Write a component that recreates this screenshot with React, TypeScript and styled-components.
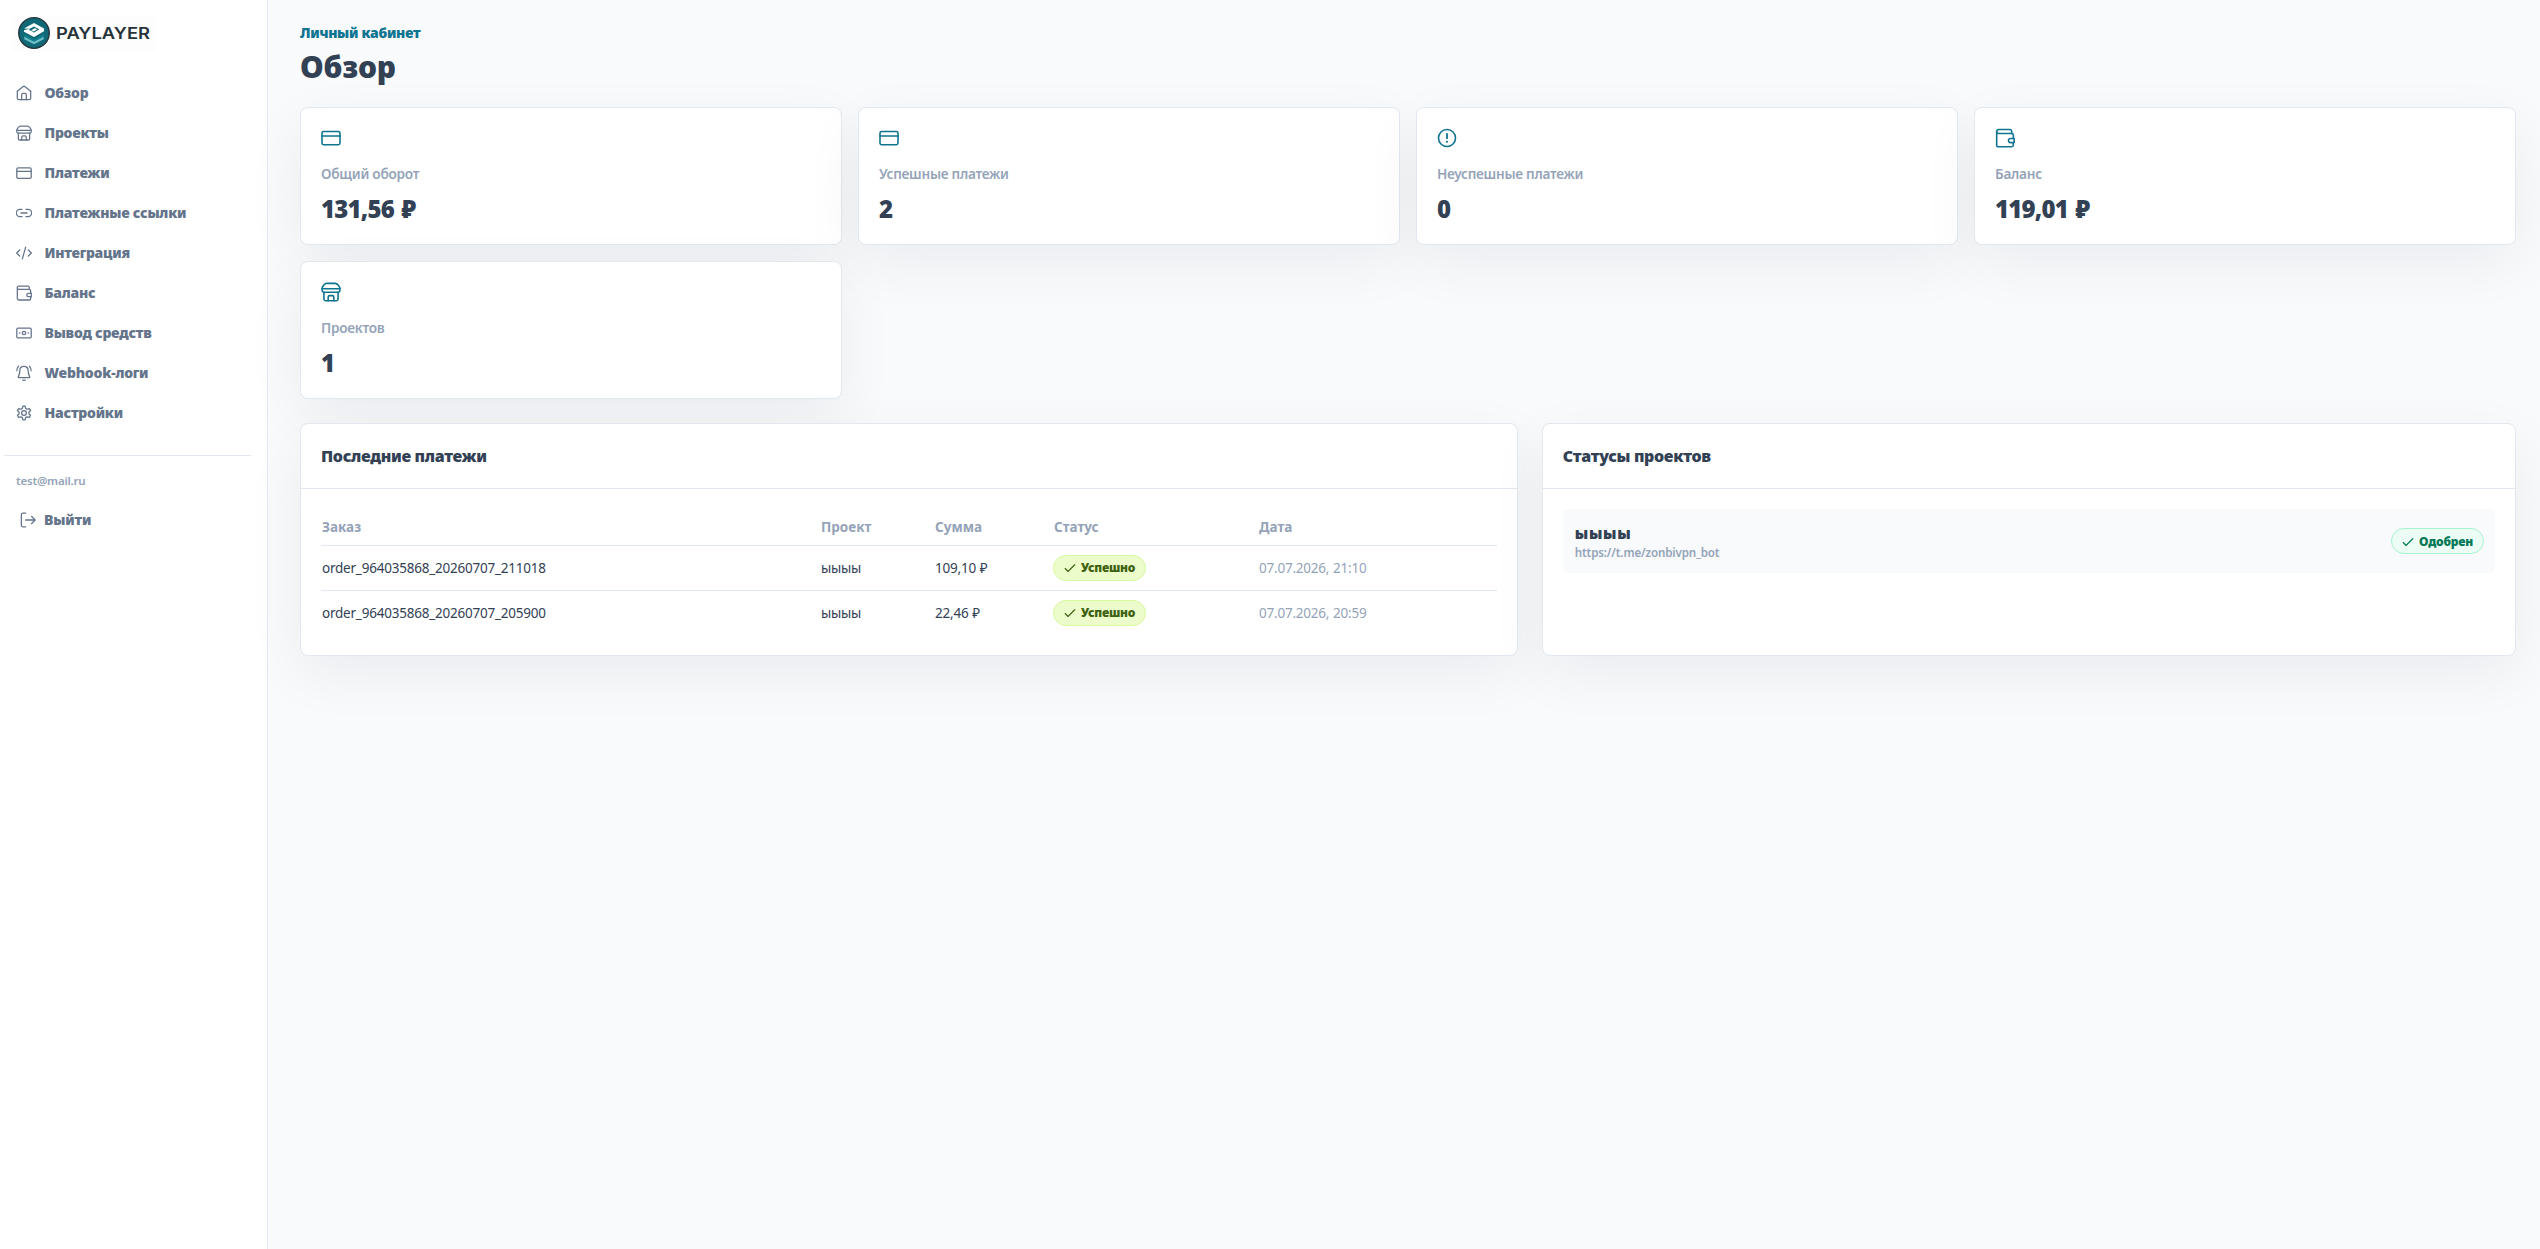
import React from 'react';
import styled, { createGlobalStyle } from 'styled-components';

const GlobalStyle = createGlobalStyle`
  *, *::before, *::after { box-sizing: border-box; }
  body {
    margin: 0;
    background: #f8fafc;
    color: #334155;
    font-family: "Noto Sans", "Open Sans", sans-serif;
    font-size: 14px;
    line-height: 20px;
  }
`;

const ink = '#334155';
const muted = '#94a3b8';
const line = '#e2e8f0';
const accent = '#0e7490';

const Shell = styled.div`
  display: grid;
  grid-template-columns: 268px minmax(0, 1fr);
  min-height: 100vh;
`;

const Sidebar = styled.aside`
  display: flex;
  flex-direction: column;
  padding: 15px 16px 0 4px;
  background: #fff;
  border-right: 1px solid ${line};
`;

const Brand = styled.div`
  display: flex;
  align-items: center;
  width: 144px;
  height: 36px;
  margin: 0 0 22px 8px;
  padding-left: 5.5px;
  background: #fdfdfd;
`;

const Nav = styled.nav`
  display: flex;
  flex-direction: column;
`;

const NavItem = styled.a`
  display: flex;
  align-items: center;
  gap: 12.5px;
  height: 40px;
  padding: 0 12px;
  color: #64748b;
  font-weight: 900;
  letter-spacing: -0.24px;
`;

const Account = styled.div`
  display: flex;
  flex-direction: column;
  margin-top: 22px;
  padding-top: 15px;
  border-top: 1px solid ${line};
`;

const Email = styled.div`
  padding-left: 12px;
  color: ${muted};
  font-size: 11.5px;
  font-weight: 600;
  line-height: 20px;
  letter-spacing: -0.2px;
`;

const Logout = styled.button`
  display: flex;
  align-items: center;
  gap: 8px;
  height: 40px;
  margin-top: 9px;
  padding: 0 16px;
  border: 0;
  background: none;
  color: #64748b;
  font: inherit;
  font-weight: 900;
  letter-spacing: -0.15px;
`;

const Main = styled.main`
  padding: 23px 24px 24px 32px;
`;

const Eyebrow = styled.p`
  margin: 0;
  color: ${accent};
  font-weight: 900;
  letter-spacing: -0.3px;
`;

const Title = styled.h1`
  margin: 4px 0 20px;
  color: ${ink};
  font-size: 30px;
  font-weight: 900;
  line-height: 40px;
  letter-spacing: -0.2px;
`;

const Surface = styled.section`
  border: 1px solid ${line};
  border-radius: 8px;
  background: #fff;
  box-shadow: 0 18px 58px rgba(15, 23, 42, 0.06);
`;

const Stats = styled.div`
  display: grid;
  grid-template-columns: repeat(4, minmax(0, 1fr));
  gap: 16px;
`;

const StatCard = styled(Surface)`
  display: flex;
  flex-direction: column;
  height: 138px;
  padding: 20px;
`;

const StatLabel = styled.div`
  margin-top: 16px;
  color: ${muted};
  font-size: 13.6px;
  font-weight: 600;
  letter-spacing: -0.25px;
`;

const StatValue = styled.div`
  margin-top: 9px;
  color: ${ink};
  font-size: 24px;
  font-weight: 900;
  line-height: 32px;
  letter-spacing: -0.8px;
  word-spacing: 2px;
`;

const Panels = styled.div`
  display: grid;
  grid-template-columns: 1.25fr 1fr;
  gap: 24px;
  margin-top: 24px;
`;

const PanelHeader = styled.header`
  display: flex;
  align-items: center;
  height: 65px;
  padding: 0 20px;
  border-bottom: 1px solid ${line};
`;

const PanelTitle = styled.h2`
  margin: 0;
  color: ${ink};
  font-size: 16px;
  font-weight: 900;
  line-height: 24px;
  letter-spacing: -0.33px;
`;

const PanelBody = styled.div`
  padding: 20px;
`;

const Table = styled.table`
  width: 100%;
  border-collapse: collapse;
  table-layout: fixed;
  font-size: 13.5px;
`;

const Column = styled.col<{ $width?: string }>`
  width: ${(p) => p.$width ?? 'auto'};
`;

const HeadCell = styled.th`
  height: 36px;
  padding: 0 0 0 1px;
  border-bottom: 1px solid ${line};
  color: ${muted};
  font-weight: 700;
  text-align: left;
`;

const Row = styled.tr`
  height: 45px;
  &:not(:last-child) { border-bottom: 1px solid ${line}; }
`;

const Cell = styled.td<{ $muted?: boolean }>`
  padding: 0 0 0 1px;
  color: ${(p) => (p.$muted ? muted : ink)};
  letter-spacing: -0.22px;
  word-spacing: 0.5px;
`;

const BadgeCell = styled(Cell)`
  padding: 0;
`;

const Badge = styled.span<{ $tone: 'lime' | 'green' }>`
  display: inline-flex;
  align-items: center;
  gap: 5px;
  height: 26px;
  padding: 1px 10px 0;
  border: 1px solid ${(p) => (p.$tone === 'lime' ? '#d9f99d' : '#a7f3d0')};
  border-radius: 13px;
  background: ${(p) => (p.$tone === 'lime' ? '#ecfccb' : '#ecfdf5')};
  color: ${(p) => (p.$tone === 'lime' ? '#3f6212' : '#047857')};
  font-size: 12px;
  font-weight: 900;
  line-height: 16px;
  letter-spacing: -0.22px;
  vertical-align: middle;
`;

const Project = styled.div`
  display: flex;
  align-items: center;
  justify-content: space-between;
  height: 64px;
  padding: 0 11px 0 12px;
  border-radius: 6px;
  background: #f8fafc;
`;

const ProjectName = styled.div`
  margin-top: 3px;
  color: ${ink};
  font-size: 15.5px;
  font-weight: 900;
  line-height: 20px;
  letter-spacing: 0.7px;
`;

const ProjectUrl = styled.div`
  padding-top: 1px;
  color: ${muted};
  font-size: 11.6px;
  font-weight: 600;
  line-height: 18px;
  letter-spacing: -0.15px;
`;

const Icon = styled.svg.attrs({ viewBox: '0 0 24 24' })<{ $size: number }>`
  flex: none;
  width: ${(p) => p.$size}px;
  height: ${(p) => p.$size}px;
  fill: none;
  stroke: currentColor;
  stroke-width: 1.9;
  stroke-linecap: round;
  stroke-linejoin: round;
`;

const StatIcon = styled(Icon)`
  color: ${accent};
`;

const glyphs = {
  home: (
    <>
      <path d="M2 9.5 10.3 2.6a2.7 2.7 0 0 1 3.4 0L22 9.5" />
      <path d="M2 9.5V20a2 2 0 0 0 2 2h16a2 2 0 0 0 2-2V9.5" />
      <path d="M8.5 22v-7.5a2 2 0 0 1 2-2h3a2 2 0 0 1 2 2V22" />
    </>
  ),
  store: (
    <>
      <path d="M7 1.600h10c2.600 0 5.700 3.800 5.700 6.400H1.300c0-2.600 3.100-6.400 5.700-6.400Z" />
      <path d="M1.300 8v2.300a1.900 1.900 0 0 0 1.900 1.900h17.600a1.900 1.900 0 0 0 1.900-1.900V8" />
      <path d="M3.500 12.200v8.300a2 2 0 0 0 2 2h13a2 2 0 0 0 2-2v-8.300" />
      <path d="M8.600 22.500v-4.200a2 2 0 0 1 2-2h2.800a2 2 0 0 1 2 2v4.200" />
    </>
  ),
  card: (
    <>
      <rect x="1.200" y="4.200" width="21.600" height="15.800" rx="2" />
      <path d="M1.200 9.500h21.600" />
    </>
  ),
  link: (
    <path d="M9 17.500H6a5.500 5.500 0 0 1 0-11h3M15 6.500h3a5.500 5.500 0 0 1 0 11h-3M7.500 12h9" />
  ),
  code: <path d="m18.500 16.500 4.500-4.500-4.500-4.500M5.500 7.500 1 12l4.500 4.500M14.500 3.200l-5 17.600" />,
  wallet: (
    <>
      <path d="M22 12.500V8.500a2 2 0 0 0-2-2H4.200A2.300 2.300 0 0 1 2 4.300v16a2.200 2.200 0 0 0 2.200 2.200H20a2 2 0 0 0 2-2v-3" />
      <path d="M20 6.500V3.800a2 2 0 0 0-2-2H4.300A2.300 2.300 0 0 0 2 4.200" />
      <path d="M23 12.500h-4.300a2.500 2.500 0 0 0 0 5H23Z" />
    </>
  ),
  cash: (
    <>
      <rect x="1.200" y="4.700" width="21.600" height="14.600" rx="1.800" />
      <circle cx="12" cy="12" r="2.600" />
      <path d="M5.500 12h.2M18.300 12h.2" strokeWidth="2.200" />
    </>
  ),
  bell: (
    <>
      <path d="M12 2.200c-4.200 0-6.300 3-6.300 6.500 0 5.300-1.500 7.200-2.300 9.300-.2.500.1 1 .7 1h15.800c.6 0 .9-.5.7-1-.8-2.100-2.300-4-2.300-9.300 0-3.500-2.100-6.500-6.300-6.500Z" />
      <path d="M10.300 22.400c.9.700 2.500.7 3.400 0M3.800 1.700C2.300 3.600 1.300 6 1.300 8.500M20.200 1.700c1.500 1.900 2.500 4.300 2.500 6.800" />
    </>
  ),
  gear: (
    <>
      <circle cx="12" cy="12" r="3.600" />
      <path d="M10.300 1.800h3.400l.8 3.300 2.200 1.300 3.400-1 1.700 3-2.400 2.500v2.300l2.400 2.500-1.700 3-3.400-1-2.200 1.300-.8 3.300h-3.400l-.8-3.300-2.200-1.300-3.400 1-1.700-3 2.400-2.500v-2.300L2.200 8.400l1.700-3 3.400 1 2.200-1.300Z" />
    </>
  ),
  logout: (
    <path d="M8.500 1.700H4.500a2.500 2.500 0 0 0-2.500 2.500v15.600a2.500 2.500 0 0 0 2.500 2.500h4M8.500 12h14M17.500 6.800l5.200 5.200-5.200 5.200" />
  ),
  alert: (
    <>
      <circle cx="12" cy="12" r="10.200" />
      <path d="M12 7.200v5.200" strokeWidth="2.200" />
      <path d="M12 16.400h.01" strokeWidth="2.500" />
    </>
  ),
  check: <path d="m2.500 13 5.500 6L21.500 5.500" strokeWidth="2.300" />,
};

type Glyph = keyof typeof glyphs;

const LogoMark = styled.svg`
  flex: none;
  width: 32px;
  height: 32px;
`;

const Wordmark = styled.svg`
  width: 96px;
  height: 20px;
  margin-left: 6.5px;
  font-family: Inter, sans-serif;
  font-size: 16.5px;
  font-weight: 600;
  fill: #26343b;
`;

const Logo = () => (
  <Brand>
    <LogoMark viewBox="0 0 32 32">
      <circle cx="16" cy="16" r="15.300" fill="#116977" stroke="#23323a" strokeWidth="1.300" />
      <path d="M6.300 22.300 16 27.300l9.700-5v-2.500L16 24.700l-9.700-4.900Z" fill="#6cc0c9" />
      <path d="M6.300 17.400 16 22.700l9.700-5.300v2L16 24.300l-9.700-4.900Z" fill="#168493" />
      <path d="M6 11.500 16 6l10 5.500v2.700L16 20 6 14.700v-1.500l4.500-1.200 5.500 3.500 5.200-3.200-5.200-2.900-4.200 2.400Z" fill="#fff" />
      <path d="m11 13.200 4.700-2.600 5 1.500-4.900 3.300-1.300-2Z" fill="#116977" />
      <path d="m13.300 13.300 3.400-2 2.700.7-3.500 2.400Z" fill="#fff" />
    </LogoMark>
    <Wordmark>
      <text x="0" y="16" textLength="94" lengthAdjust="spacingAndGlyphs">PAYLAYER</text>
    </Wordmark>
  </Brand>
);

const navItems: { icon: Glyph; label: string }[] = [
  { icon: 'home', label: 'Обзор' },
  { icon: 'store', label: 'Проекты' },
  { icon: 'card', label: 'Платежи' },
  { icon: 'link', label: 'Платежные ссылки' },
  { icon: 'code', label: 'Интеграция' },
  { icon: 'wallet', label: 'Баланс' },
  { icon: 'cash', label: 'Вывод средств' },
  { icon: 'bell', label: 'Webhook-логи' },
  { icon: 'gear', label: 'Настройки' },
];

const stats: { icon: Glyph; label: string; value: string }[] = [
  { icon: 'card', label: 'Общий оборот', value: '131,56 ₽' },
  { icon: 'card', label: 'Успешные платежи', value: '2' },
  { icon: 'alert', label: 'Неуспешные платежи', value: '0' },
  { icon: 'wallet', label: 'Баланс', value: '119,01 ₽' },
  { icon: 'store', label: 'Проектов', value: '1' },
];

const payments = [
  { order: 'order_964035868_20260707_211018', project: 'ыыыы', sum: '109,10 ₽', date: '07.07.2026, 21:10' },
  { order: 'order_964035868_20260707_205900', project: 'ыыыы', sum: '22,46 ₽', date: '07.07.2026, 20:59' },
];

export default function App() {
  return (
    <Shell>
      <GlobalStyle />
      <Sidebar>
        <Logo />
        <Nav>
          {navItems.map((item) => (
            <NavItem key={item.label}>
              <Icon $size={16}>{glyphs[item.icon]}</Icon>
              {item.label}
            </NavItem>
          ))}
        </Nav>
        <Account>
          <Email>test@mail.ru</Email>
          <Logout>
            <Icon $size={16}>{glyphs.logout}</Icon>
            Выйти
          </Logout>
        </Account>
      </Sidebar>
      <Main>
        <Eyebrow>Личный кабинет</Eyebrow>
        <Title>Обзор</Title>
        <Stats>
          {stats.map((stat) => (
            <StatCard key={stat.label}>
              <StatIcon $size={20}>{glyphs[stat.icon]}</StatIcon>
              <StatLabel>{stat.label}</StatLabel>
              <StatValue>{stat.value}</StatValue>
            </StatCard>
          ))}
        </Stats>
        <Panels>
          <Surface>
            <PanelHeader>
              <PanelTitle>Последние платежи</PanelTitle>
            </PanelHeader>
            <PanelBody>
              <Table>
                <colgroup>
                  <Column $width="499px" />
                  <Column $width="114px" />
                  <Column $width="119px" />
                  <Column $width="205px" />
                  <Column />
                </colgroup>
                <thead>
                  <tr>
                    <HeadCell>Заказ</HeadCell>
                    <HeadCell>Проект</HeadCell>
                    <HeadCell>Сумма</HeadCell>
                    <HeadCell>Статус</HeadCell>
                    <HeadCell>Дата</HeadCell>
                  </tr>
                </thead>
                <tbody>
                  {payments.map((p) => (
                    <Row key={p.order}>
                      <Cell>{p.order}</Cell>
                      <Cell>{p.project}</Cell>
                      <Cell>{p.sum}</Cell>
                      <BadgeCell>
                        <Badge $tone="lime">
                          <Icon $size={12}>{glyphs.check}</Icon>
                          Успешно
                        </Badge>
                      </BadgeCell>
                      <Cell $muted>{p.date}</Cell>
                    </Row>
                  ))}
                </tbody>
              </Table>
            </PanelBody>
          </Surface>
          <Surface>
            <PanelHeader>
              <PanelTitle>Статусы проектов</PanelTitle>
            </PanelHeader>
            <PanelBody>
              <Project>
                <div>
                  <ProjectName>ыыыы</ProjectName>
                  <ProjectUrl>https://t.me/zonbivpn_bot</ProjectUrl>
                </div>
                <Badge $tone="green">
                  <Icon $size={12}>{glyphs.check}</Icon>
                  Одобрен
                </Badge>
              </Project>
            </PanelBody>
          </Surface>
        </Panels>
      </Main>
    </Shell>
  );
}
